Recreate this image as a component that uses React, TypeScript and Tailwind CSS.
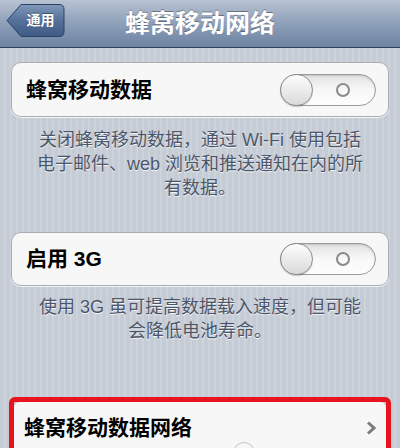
const font = "font-['Liberation_Sans','Noto_Sans_CJK_SC',sans-serif]";

function Toggle() {
  return (
    <div className="flex h-[32px] w-[96px] items-center rounded-full border border-[#9c9c9c] bg-gradient-to-b from-[#e2e2e2] via-[#f8f8f8] to-[#fdfdfd] shadow-[inset_0_1px_2px_rgba(0,0,0,0.15)]">
      <div className="-ml-px h-[32px] w-[33px] shrink-0 rounded-full border border-[#8e8e8e] bg-gradient-to-b from-[#fdfdfd] to-[#dadada] shadow-[0_1px_1px_rgba(0,0,0,0.2)]" />
      <div className="flex flex-1 justify-center pr-[2px]">
        <span className="h-[14px] w-[14px] rounded-full border-2 border-[#8a8a8a]" />
      </div>
    </div>
  );
}

function Card({ children }: { children: React.ReactNode }) {
  return (
    <div className="mx-[11px] rounded-[10px] border border-[#a9adb3] bg-[#f7f7f7] shadow-[0_1px_0_rgba(255,255,255,0.8)]">
      {children}
    </div>
  );
}

function Note({ lines }: { lines: string[] }) {
  return (
    <div className="text-center text-[18px] leading-[24px] text-[#4c566a] [text-shadow:0_1px_0_rgba(255,255,255,0.8)]">
      {lines.map((l, i) => (
        <div key={i} className="whitespace-nowrap">
          {l}
        </div>
      ))}
    </div>
  );
}

export default function App() {
  return (
    <div className={`h-[448px] w-[400px] overflow-hidden ${font} bg-[repeating-linear-gradient(90deg,#c6ccd5_0px,#c6ccd5_4px,#cdd3db_4px,#cdd3db_6px)]`}>
      {/* 导航栏 */}
      <div className="relative flex h-[48px] items-center justify-center border-b border-[#2f3f55] bg-gradient-to-b from-[#b8c3d2] via-[#8e9fb8] to-[#6c83a3]">
        <div className="absolute left-[6px] top-[3px] flex h-[35px] w-[59px] items-center justify-center pl-[10px]">
          <svg className="absolute inset-0" width="59" height="35" viewBox="0 0 59 35">
            <defs>
              <linearGradient id="bk" x1="0" y1="0" x2="0" y2="1">
                <stop offset="0" stopColor="#7f98bb" />
                <stop offset="0.5" stopColor="#557099" />
                <stop offset="1" stopColor="#3e5a86" />
              </linearGradient>
            </defs>
            <path
              d="M1 17.5 L15 1.5 H53 Q58 1.5 58 6.5 V28.5 Q58 33.5 53 33.5 H15 Z"
              fill="url(#bk)"
              stroke="#2c4264"
              strokeWidth="1"
            />
          </svg>
          <span className="relative text-[14px] font-bold text-white [text-shadow:0_-1px_0_rgba(0,0,0,0.4)]">
            通用
          </span>
        </div>
        <h1 className="text-[25px] font-bold text-white [text-shadow:0_-1px_0_rgba(0,0,0,0.35)]">
          蜂窝移动网络
        </h1>
      </div>

      <div className="pt-[14px]">
        <Card>
          <div className="flex h-[53px] items-center justify-between pl-[14px] pr-[12px]">
            <span className="text-[21px] font-bold text-black">蜂窝移动数据</span>
            <Toggle />
          </div>
        </Card>

        <div className="mt-[11px]">
          <Note
            lines={[
              "关闭蜂窝移动数据，通过 Wi-Fi 使用包括",
              "电子邮件、web 浏览和推送通知在内的所",
              "有数据。",
            ]}
          />
        </div>

        <div className="mt-[32px]">
          <Card>
            <div className="flex h-[52px] items-center justify-between pl-[14px] pr-[12px]">
              <span className="text-[21px] font-bold text-black">启用 3G</span>
              <Toggle />
            </div>
          </Card>
        </div>

        <div className="mt-[9px]">
          <Note lines={["使用 3G 虽可提高数据载入速度，但可能", "会降低电池寿命。"]} />
        </div>

        <div className="mx-[9px] mt-[54px] rounded-[6px] border-[5px] border-[#e8131d]">
          <div className="relative h-[80px] rounded-t-[6px] bg-[#f7f7f7]">
            <div className="flex h-[52px] items-center justify-between pl-[10px] pr-[10px]">
              <span className="text-[21px] font-bold text-black">蜂窝移动数据网络</span>
              <svg width="10" height="14" viewBox="0 0 10 14">
                <path d="M2 1.5 L8 7 L2 12.5" fill="none" stroke="#7c7c7c" strokeWidth="3" />
              </svg>
            </div>
            <span className="absolute left-[219px] top-[40px] h-[22px] w-[22px] rounded-full border border-[#c4c4c4]" />
          </div>
        </div>
      </div>
    </div>
  );
}
